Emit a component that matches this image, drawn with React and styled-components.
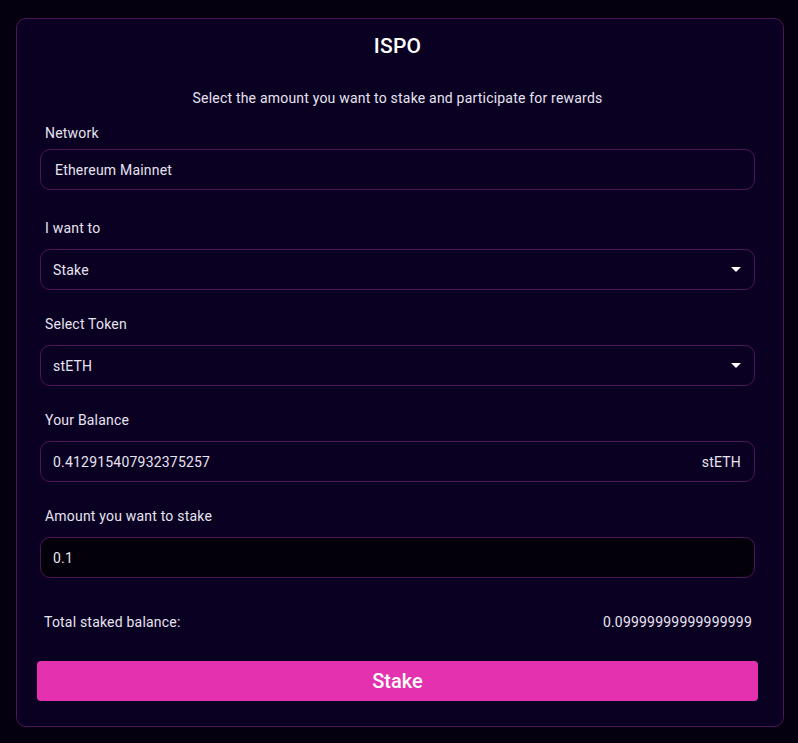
import styled, { createGlobalStyle } from "styled-components";

const GlobalStyle = createGlobalStyle`
  body {
    margin: 0;
    background: #05000f;
    font-family: Roboto, "Noto Sans", sans-serif;
    color: #e6e4f0;
    letter-spacing: 0.2px;
  }
`;

const Page = styled.div`
  padding: 18px 14px 16px 16px;
`;

const Card = styled.div`
  background: #0a0022;
  border: 1px solid #4d1656;
  border-radius: 10px;
  padding: 14px 28px 25px 23px;
  display: flex;
  flex-direction: column;
`;

const Title = styled.h1`
  margin: 0;
  text-align: center;
  font-size: 21px;
  font-weight: 500;
  line-height: 26px;
  color: #ffffff;
`;

const Subtitle = styled.p`
  margin: 29px 0 0;
  text-align: center;
  font-size: 14px;
  line-height: 20px;
`;

const Field = styled.div`
  display: flex;
  flex-direction: column;
  margin-top: ${(p) => p.$top}px;
`;

const Label = styled.label`
  font-size: 14px;
  line-height: 20px;
  padding-left: 5px;
  margin-bottom: ${(p) => p.$gap}px;
`;

const Box = styled.div`
  height: 41px;
  box-sizing: border-box;
  border: 1px solid #4d1656;
  border-radius: 10px;
  background: ${(p) => (p.$dark ? "#030009" : "#0a0022")};
  display: flex;
  align-items: center;
  justify-content: space-between;
  padding: 0 12px 0 ${(p) => p.$indent || 12}px;
  font-size: 14px;
`;

const Caret = styled.span`
  width: 0;
  height: 0;
  border-left: 5px solid transparent;
  border-right: 5px solid transparent;
  border-top: 5px solid #ffffff;
  margin-right: 1px;
`;

const Suffix = styled.span`
  margin-right: 1px;
`;

const TotalRow = styled.div`
  display: flex;
  justify-content: space-between;
  margin-top: 34px;
  padding: 0 3px 0 4px;
  font-size: 14px;
  line-height: 20px;
`;

const StakeButton = styled.button`
  margin: 29px -3px 0 -3px;
  height: 40px;
  border: none;
  border-radius: 4px;
  background: #e331b0;
  color: #ffffff;
  font-family: inherit;
  font-size: 20px;
  font-weight: 500;
  cursor: pointer;
`;

const App = () => {
  return (
    <>
      <GlobalStyle />
      <Page>
        <Card>
          <Title>ISPO</Title>
          <Subtitle>
            Select the amount you want to stake and participate for rewards
          </Subtitle>
          <Field $top={15}>
            <Label $gap={6}>Network</Label>
            <Box $indent={14}>Ethereum Mainnet</Box>
          </Field>
          <Field $top={28}>
            <Label $gap={11}>I want to</Label>
            <Box>
              Stake
              <Caret />
            </Box>
          </Field>
          <Field $top={24}>
            <Label $gap={11}>Select Token</Label>
            <Box>
              stETH
              <Caret />
            </Box>
          </Field>
          <Field $top={24}>
            <Label $gap={11}>Your Balance</Label>
            <Box>
              0.412915407932375257
              <Suffix>stETH</Suffix>
            </Box>
          </Field>
          <Field $top={24}>
            <Label $gap={11}>Amount you want to stake</Label>
            <Box $dark>0.1</Box>
          </Field>
          <TotalRow>
            <span>Total staked balance:</span>
            <span>0.09999999999999999</span>
          </TotalRow>
          <StakeButton>Stake</StakeButton>
        </Card>
      </Page>
    </>
  );
};

export default App;
